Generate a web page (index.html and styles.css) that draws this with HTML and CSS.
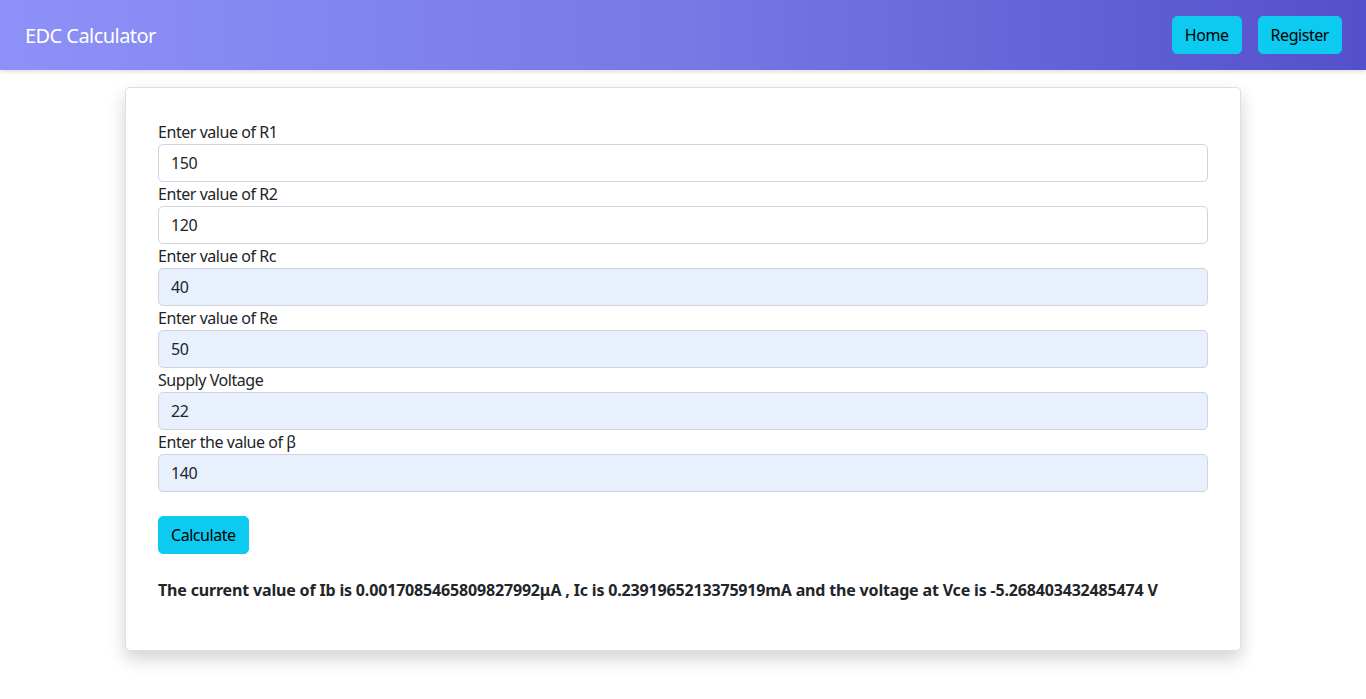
FILE: index.html
```html
<!DOCTYPE html>
<html lang="en">
<head>
<meta charset="utf-8">
<title>EDC Calculator</title>
<link rel="stylesheet" href="styles.css">
</head>
<body>
<nav class="navbar">
  <span class="brand">EDC Calculator</span>
  <div class="nav-actions">
    <button class="btn btn-info">Home</button>
    <button class="btn btn-info">Register</button>
  </div>
</nav>
<main class="container">
  <div class="card">
    <form class="form">
      <label class="label">Enter value of R1</label>
      <input class="input" value="150">
      <label class="label">Enter value of R2</label>
      <input class="input" value="120">
      <label class="label">Enter value of Rc</label>
      <input class="input filled" value="40">
      <label class="label">Enter value of Re</label>
      <input class="input filled" value="50">
      <label class="label">Supply Voltage</label>
      <input class="input filled" value="22">
      <label class="label">Enter the value of β</label>
      <input class="input filled" value="140">
      <div class="actions">
        <button type="button" class="btn btn-info">Calculate</button>
      </div>
    </form>
    <p class="result">The current value of Ib is 0.0017085465809827992μA , Ic is 0.2391965213375919mA and the voltage at Vce is -5.268403432485474 V</p>
  </div>
</main>
</body>
</html>
```
FILE: styles.css
```css
* { box-sizing: border-box; }
html, body { margin: 0; padding: 0; }
body {
  font-family: "Noto Sans", "Open Sans", sans-serif;
  font-size: 16px;
  line-height: 24px;
  letter-spacing: -0.45px;
  color: #212529;
  background: #fff;
  min-height: 699px;
}
.navbar {
  height: 70px;
  display: flex;
  align-items: center;
  justify-content: space-between;
  padding: 0 24px 0 25px;
  background: linear-gradient(90deg, #8d91f8 0%, #7679e6 50%, #5450cb 100%);
  box-shadow: 0 2px 4px rgba(0,0,0,0.12);
}
.brand {
  color: #fff;
  font-size: 20px;
  line-height: 30px;
  letter-spacing: -0.55px;
  padding-top: 2px;
}
.nav-actions {
  display: flex;
  gap: 16px;
}
.btn {
  font-family: inherit;
  font-size: 16px;
  line-height: 24px;
  letter-spacing: -0.45px;
  padding: 6px 12px;
  border: 1px solid #0dcaf0;
  border-radius: 5px;
  background: #0dcaf0;
  color: #000;
  cursor: pointer;
}
.container {
  max-width: 1140px;
  margin: 17px auto 0;
  padding: 0 12px;
}
.card {
  border: 1px solid rgba(0,0,0,0.125);
  border-radius: 5px;
  padding: 32px;
  box-shadow: 0 8px 18px rgba(0,0,0,0.18);
  background: #fff;
}
.form {
  display: flex;
  flex-direction: column;
}
.label {
  display: block;
}
.input {
  display: block;
  width: 100%;
  height: 38px;
  padding: 6px 12px;
  font-family: inherit;
  font-size: 16px;
  line-height: 24px;
  letter-spacing: -0.45px;
  color: #212529;
  background: #fff;
  border: 1px solid #ced4da;
  border-radius: 5px;
}
.input.filled {
  background: #e8f0fe;
}
.actions {
  margin-top: 24px;
}
.result {
  margin: 24px 0 16px;
  font-weight: 700;
  letter-spacing: -0.17px;
}
```
